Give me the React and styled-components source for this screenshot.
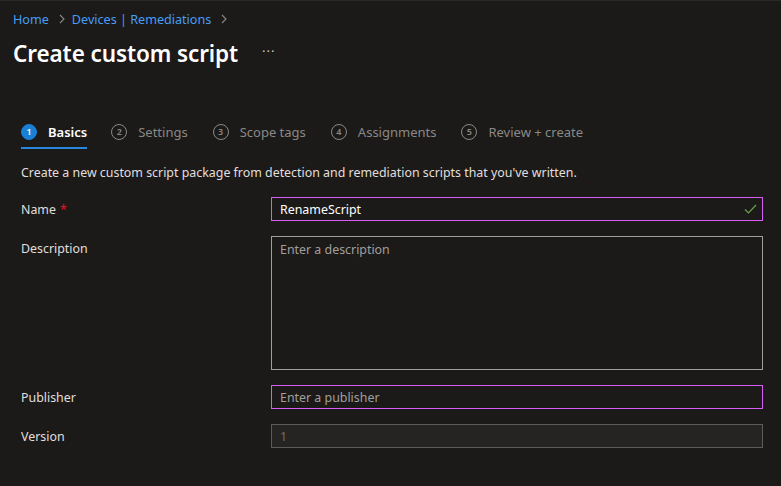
import styled, { createGlobalStyle } from "styled-components";

const GlobalStyle = createGlobalStyle`
  html, body {
    margin: 0;
    padding: 0;
    background: #1b1a19;
  }
  body {
    font-family: "Noto Sans", "Open Sans", sans-serif;
    color: #ffffff;
  }
`;

const Page = styled.div`
  width: 781px;
  height: 486px;
  box-sizing: border-box;
  border-top: 1px solid #2a2928;
  background: #1b1a19;
  overflow: hidden;
`;

const Header = styled.div`
  padding: 9px 13px 0;
`;

const Crumbs = styled.nav`
  display: flex;
  align-items: center;
  height: 18px;
  font-size: 12.6px;
  color: #479ef5;
`;

const Chevron = styled.span`
  display: inline-flex;
  margin: 0 6px 0 9px;
  color: #8a8886;
`;

const TitleRow = styled.div`
  display: flex;
  align-items: center;
  margin-top: 10px;
  height: 30px;
`;

const Title = styled.h1`
  margin: 0;
  font-size: 22.5px;
  font-weight: 600;
  letter-spacing: -0.1px;
`;

const More = styled.span`
  margin-left: 24px;
  color: #c8c6c4;
  font-size: 13px;
  letter-spacing: 1px;
  padding-bottom: 4px;
`;

const Body = styled.div`
  padding: 48px 18px 0 21px;
`;

const Steps = styled.div`
  display: flex;
  height: 32px;
`;

const Step = styled.div`
  display: flex;
  align-items: center;
  gap: 11px;
  height: 31px;
  margin-right: ${(p) => (p.$active ? "24px" : "25px")};
  font-size: 13px;
  color: ${(p) => (p.$active ? "#ffffff" : "#8a8886")};
  font-weight: ${(p) => (p.$active ? 600 : 400)};
  border-bottom: 2px solid ${(p) => (p.$active ? "#2886de" : "transparent")};
`;

const Circle = styled.span`
  box-sizing: border-box;
  width: 16px;
  height: 16px;
  border-radius: 50%;
  display: inline-flex;
  align-items: center;
  justify-content: center;
  font-size: 9px;
  font-weight: 600;
  background: ${(p) => (p.$active ? "#1a7fd6" : "transparent")};
  border: 1px solid ${(p) => (p.$active ? "#1a7fd6" : "#8a8886")};
  color: ${(p) => (p.$active ? "#ffffff" : "#8a8886")};
`;

const Intro = styled.p`
  margin: 16px 0 0;
  font-size: 12.4px;
  color: #e1dfdd;
`;

const Form = styled.div`
  display: grid;
  grid-template-columns: 250px 1fr;
  row-gap: 15px;
  margin-top: 16px;
`;

const Label = styled.label`
  box-sizing: border-box;
  font-size: 12.4px;
  color: #e1dfdd;
  line-height: 24px;
  padding-top: 1px;
  height: 24px;
`;

const Required = styled.span`
  color: #e81123;
  margin-left: 4px;
`;

const Field = styled.div`
  box-sizing: border-box;
  position: relative;
  display: flex;
  align-items: ${(p) => (p.$multi ? "flex-start" : "center")};
  height: ${(p) => p.$h || "24px"};
  padding: ${(p) => (p.$multi ? "4px 8px" : "0 8px")};
  border: 1px solid
    ${(p) =>
      p.$focus ? "#d65cf3" : p.$disabled ? "#5c5b5a" : "#a19f9d"};
  background: ${(p) => (p.$disabled ? "#252423" : "#1b1a19")};
  font-size: 12.4px;
  color: ${(p) => (p.$placeholder ? "#a19f9d" : p.$disabled ? "#6e6d6c" : "#ffffff")};
`;

const Check = styled.svg`
  position: absolute;
  right: 5px;
  top: 5px;
`;

const steps = ["Basics", "Settings", "Scope tags", "Assignments", "Review + create"];

function ChevronIcon() {
  return (
    <svg width="8" height="10" viewBox="0 0 8 10">
      <path d="M2 1l4 4-4 4" fill="none" stroke="currentColor" strokeWidth="1.1" />
    </svg>
  );
}

export default function App() {
  return (
    <Page>
      <GlobalStyle />
      <Header>
        <Crumbs>
          <span>Home</span>
          <Chevron>
            <ChevronIcon />
          </Chevron>
          <span>Devices | Remediations</span>
          <Chevron>
            <ChevronIcon />
          </Chevron>
        </Crumbs>
        <TitleRow>
          <Title>Create custom script</Title>
          <More>···</More>
        </TitleRow>
      </Header>
      <Body>
        <Steps>
          {steps.map((s, i) => (
            <Step key={s} $active={i === 0}>
              <Circle $active={i === 0}>{i + 1}</Circle>
              {s}
            </Step>
          ))}
        </Steps>
        <Intro>
          Create a new custom script package from detection and remediation scripts that you've written.
        </Intro>
        <Form>
          <Label>
            Name<Required>*</Required>
          </Label>
          <Field $focus>
            RenameScript
            <Check width="13" height="12" viewBox="0 0 13 12">
              <path d="M1 6.5l3.5 3.5L12 2" fill="none" stroke="#6ba04a" strokeWidth="1.2" />
            </Check>
          </Field>
          <Label>Description</Label>
          <Field $multi $placeholder $h="134px">
            Enter a description
          </Field>
          <Label>Publisher</Label>
          <Field $focus $placeholder>
            Enter a publisher
          </Field>
          <Label>Version</Label>
          <Field $disabled>1</Field>
        </Form>
      </Body>
    </Page>
  );
}
